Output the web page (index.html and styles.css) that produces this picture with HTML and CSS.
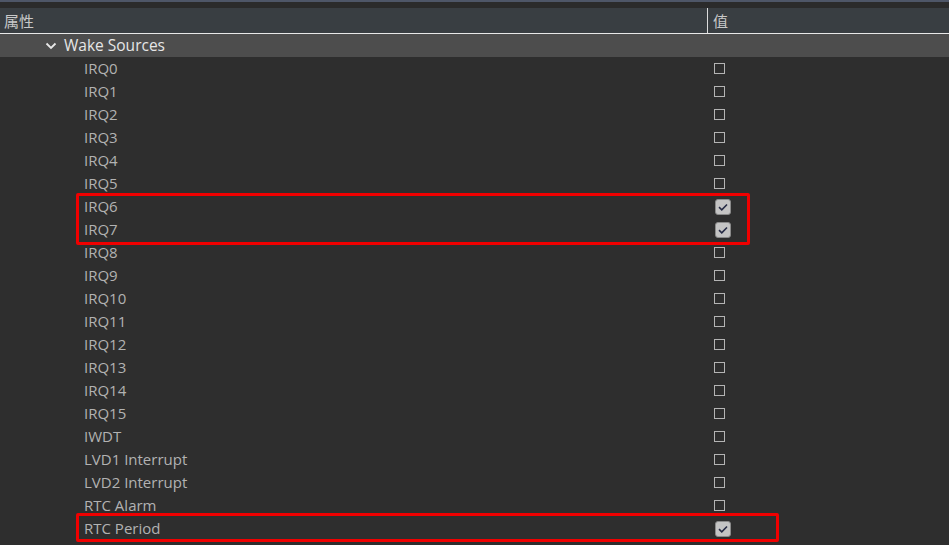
FILE: index.html
```html
<!DOCTYPE html>
<html>
<head>
<meta charset="utf-8">
<link rel="stylesheet" href="styles.css">
</head>
<body>
<div class="topbar"></div>
<div class="spacer"></div>
<div class="header">
  <div class="hcell name">属性</div>
  <div class="hcell value">值</div>
</div>
<div class="group">
  <svg class="chev" width="12" height="8" viewBox="0 0 12 8"><path d="M1.5 1.5 L6 6 L10.5 1.5" fill="none" stroke="#e8e8e8" stroke-width="1.8"/></svg>
  <span class="gtext">Wake Sources</span>
</div>
<div class="rows">
  <div class="row"><div class="label">IRQ0</div><div class="val"><span class="box"></span></div></div>
  <div class="row"><div class="label">IRQ1</div><div class="val"><span class="box"></span></div></div>
  <div class="row"><div class="label">IRQ2</div><div class="val"><span class="box"></span></div></div>
  <div class="row"><div class="label">IRQ3</div><div class="val"><span class="box"></span></div></div>
  <div class="row"><div class="label">IRQ4</div><div class="val"><span class="box"></span></div></div>
  <div class="row"><div class="label">IRQ5</div><div class="val"><span class="box"></span></div></div>
  <div class="hl hl-a">
    <div class="row"><div class="label">IRQ6</div><div class="val"><svg class="check" width="16" height="16" viewBox="0 0 16 16"><rect x="0.5" y="0.5" width="15" height="15" rx="2.5" fill="#c4c4c4" stroke="#8a8a8a"/><path d="M4 8.2 L6.8 10.8 L12 5.5" fill="none" stroke="#262b45" stroke-width="1.6"/></svg></div></div>
    <div class="row"><div class="label">IRQ7</div><div class="val"><svg class="check" width="16" height="16" viewBox="0 0 16 16"><rect x="0.5" y="0.5" width="15" height="15" rx="2.5" fill="#c4c4c4" stroke="#8a8a8a"/><path d="M4 8.2 L6.8 10.8 L12 5.5" fill="none" stroke="#262b45" stroke-width="1.6"/></svg></div></div>
  </div>
  <div class="row"><div class="label">IRQ8</div><div class="val"><span class="box"></span></div></div>
  <div class="row"><div class="label">IRQ9</div><div class="val"><span class="box"></span></div></div>
  <div class="row"><div class="label">IRQ10</div><div class="val"><span class="box"></span></div></div>
  <div class="row"><div class="label">IRQ11</div><div class="val"><span class="box"></span></div></div>
  <div class="row"><div class="label">IRQ12</div><div class="val"><span class="box"></span></div></div>
  <div class="row"><div class="label">IRQ13</div><div class="val"><span class="box"></span></div></div>
  <div class="row"><div class="label">IRQ14</div><div class="val"><span class="box"></span></div></div>
  <div class="row"><div class="label">IRQ15</div><div class="val"><span class="box"></span></div></div>
  <div class="row"><div class="label">IWDT</div><div class="val"><span class="box"></span></div></div>
  <div class="row"><div class="label">LVD1 Interrupt</div><div class="val"><span class="box"></span></div></div>
  <div class="row"><div class="label">LVD2 Interrupt</div><div class="val"><span class="box"></span></div></div>
  <div class="row"><div class="label">RTC Alarm</div><div class="val"><span class="box"></span></div></div>
  <div class="hl hl-b">
    <div class="row"><div class="label">RTC Period</div><div class="val"><svg class="check" width="16" height="16" viewBox="0 0 16 16"><rect x="0.5" y="0.5" width="15" height="15" rx="2.5" fill="#c4c4c4" stroke="#8a8a8a"/><path d="M4 8.2 L6.8 10.8 L12 5.5" fill="none" stroke="#262b45" stroke-width="1.6"/></svg></div></div>
  </div>
</div>
</body>
</html>
```
FILE: styles.css
```css
html, body {
  margin: 0;
  padding: 0;
}
body {
  background: #2e2e2e;
  font-family: "Open Sans", "Noto Sans CJK SC", sans-serif;
  font-size: 15px;
  color: #b4b4b4;
  width: 949px;
  height: 545px;
  overflow: hidden;
}
.topbar {
  height: 2px;
  background: #4e5667;
}
.spacer {
  height: 6px;
  background: #2b2b2b;
}
.header {
  display: flex;
  height: 25px;
  background: #393e42;
  border-bottom: 1px solid #e8e8e8;
}
.hcell {
  display: flex;
  align-items: center;
  font-family: "Noto Sans CJK SC", sans-serif;
  font-size: 15px;
  color: #c8c8c8;
}
.hcell.name {
  width: 703px;
  padding-left: 4px;
  border-right: 1px solid #dcdcdc;
}
.hcell.value {
  padding-left: 5px;
}
.group {
  display: flex;
  align-items: center;
  height: 23px;
  background: #4d4d4d;
  color: #e6e6e6;
  font-size: 15.5px;
}
.gtext {
  padding-bottom: 2px;
}
.chev {
  margin-left: 45px;
  margin-right: 7px;
}
.rows {
  display: flex;
  flex-direction: column;
}
.row {
  display: grid;
  grid-template-columns: 708px 1fr;
  height: 23px;
  align-items: center;
}
.label {
  padding-left: 84px;
  padding-bottom: 2px;
  color: #b2b2b2;
}
.val {
  display: flex;
  align-items: center;
  padding-left: 6px;
}
.box {
  display: block;
  width: 9px;
  height: 9px;
  border: 1px solid #b4b4b4;
}
.check {
  display: block;
  margin-left: 1px;
}
.hl {
  position: relative;
}
.hl::after {
  content: "";
  position: absolute;
  left: 76px;
  border: 3px solid #f00000;
  border-radius: 2px;
  pointer-events: none;
}
.hl-a::after {
  top: -2px;
  bottom: -4px;
  width: 668px;
}
.hl-b::after {
  top: -4px;
  bottom: -2px;
  width: 697px;
}
```
